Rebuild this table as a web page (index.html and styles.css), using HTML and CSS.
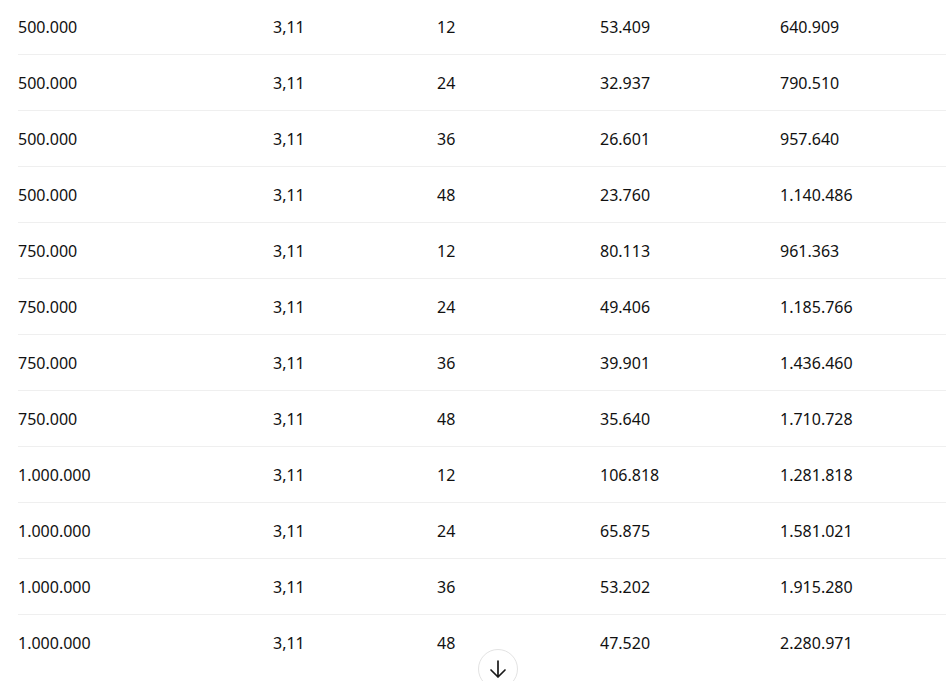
FILE: index.html
```html
<!DOCTYPE html>
<html lang="de">
<head>
<meta charset="utf-8">
<link rel="stylesheet" href="styles.css">
</head>
<body>
<div class="table">
  <div class="row"><span>500.000</span><span>3,11</span><span>12</span><span>53.409</span><span>640.909</span></div>
  <div class="row"><span>500.000</span><span>3,11</span><span>24</span><span>32.937</span><span>790.510</span></div>
  <div class="row"><span>500.000</span><span>3,11</span><span>36</span><span>26.601</span><span>957.640</span></div>
  <div class="row"><span>500.000</span><span>3,11</span><span>48</span><span>23.760</span><span>1.140.486</span></div>
  <div class="row"><span>750.000</span><span>3,11</span><span>12</span><span>80.113</span><span>961.363</span></div>
  <div class="row"><span>750.000</span><span>3,11</span><span>24</span><span>49.406</span><span>1.185.766</span></div>
  <div class="row"><span>750.000</span><span>3,11</span><span>36</span><span>39.901</span><span>1.436.460</span></div>
  <div class="row"><span>750.000</span><span>3,11</span><span>48</span><span>35.640</span><span>1.710.728</span></div>
  <div class="row"><span>1.000.000</span><span>3,11</span><span>12</span><span>106.818</span><span>1.281.818</span></div>
  <div class="row"><span>1.000.000</span><span>3,11</span><span>24</span><span>65.875</span><span>1.581.021</span></div>
  <div class="row"><span>1.000.000</span><span>3,11</span><span>36</span><span>53.202</span><span>1.915.280</span></div>
  <div class="row"><span>1.000.000</span><span>3,11</span><span>48</span><span>47.520</span><span>2.280.971</span></div>
</div>
<button class="scroll-down" aria-label="Nach unten scrollen">
  <svg width="22" height="22" viewBox="0 0 22 22" fill="none" stroke="#1a1a1a" stroke-width="1.7" stroke-linecap="round" stroke-linejoin="round"><path d="M11 3v16M4 12l7 7 7-7"/></svg>
</button>
</body>
</html>
```
FILE: styles.css
```css
html, body {
  margin: 0;
  padding: 0;
  background: #ffffff;
  overflow: hidden;
}
body {
  font-family: "Noto Sans", "Open Sans", sans-serif;
  font-size: 16px;
  color: #111111;
  width: 946px;
  height: 681px;
  position: relative;
}
.table {
  margin-top: -1px;
  padding-left: 18px;
}
.row {
  display: grid;
  grid-template-columns: 255px 164px 163px 180px 1fr;
  height: 56px;
  align-items: center;
  border-bottom: 1px solid #efefef;
  box-sizing: border-box;
}
.row:last-child {
  border-bottom: none;
}
.scroll-down {
  position: absolute;
  left: 478px;
  top: 649px;
  width: 40px;
  height: 40px;
  border-radius: 50%;
  border: 1px solid #e3e3e3;
  background: #ffffff;
  display: flex;
  align-items: center;
  justify-content: center;
  padding: 0;
}
```
